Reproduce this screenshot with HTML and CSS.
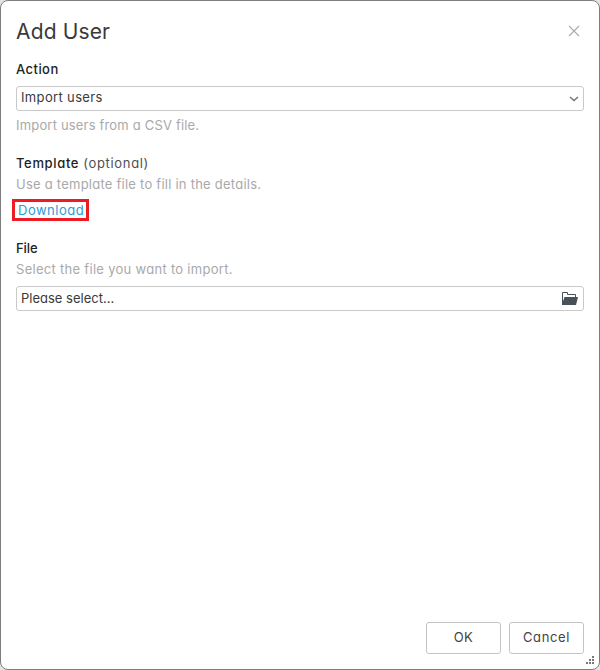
FILE: index.html
```
<!DOCTYPE html>
<html lang="en">
<head>
<meta charset="utf-8">
<title>Add User</title>
<link rel="stylesheet" href="styles.css">
</head>
<body>
<main class="dialog">
  <header class="header">
    <h1 class="title">Add User</h1>
    <svg class="close" width="12" height="12" viewBox="0 0 12 12"><path d="M1 1L11 11M11 1L1 11"/></svg>
  </header>
  <section class="group action">
    <div class="label"><span class="t-action">Action</span></div>
    <div class="field"><span class="t-value">Import users</span>
      <svg class="chevron" width="10" height="6" viewBox="0 0 10 6"><path d="M1 1L5 4.5L9 1"/></svg>
    </div>
    <div class="help"><span class="t-csv">Import users from a CSV file.</span></div>
  </section>
  <section class="group template">
    <div class="label"><span class="t-template">Template</span><span class="optional">(optional)</span></div>
    <div class="help"><span class="t-details">Use a template file to fill in the details.</span></div>
    <a class="download"><span class="t-download">Download</span></a>
  </section>
  <section class="group file">
    <div class="label"><span class="t-file">File</span></div>
    <div class="help"><span class="t-import">Select the file you want to import.</span></div>
    <div class="field field-file"><span class="t-please">Please select...</span>
      <svg class="folder" width="16" height="13" viewBox="0 0 16 13"><path class="back" d="M.5 12V.5H5.5V2.5H13.5V5"/><path class="front" d="M2.5 5H16L14 13H0V12Z"/></svg>
    </div>
  </section>
  <footer class="footer">
    <button class="button"><span class="t-ok">OK</span></button>
    <button class="button"><span class="t-cancel">Cancel</span></button>
  </footer>
  <svg class="grip" width="8" height="8" viewBox="0 0 8 8"><path d="M6 0h2v2H6zM3 3h2v2H3zM6 3h2v2H6zM0 6h2v2H0zM3 6h2v2H3zM6 6h2v2H6z"/></svg>
</main>
</body>
</html>
```
FILE: styles.css
```
* { box-sizing: border-box; }
body { margin: 0; background: #e4e4e4; }
.dialog {
  position: relative;
  display: flex;
  flex-direction: column;
  width: 600px;
  height: 670px;
  padding: 15px 15px;
  border: 1px solid #7d7d7d;
  border-radius: 8px;
  background: #fff;
  color: #3a3a3a;
  font: 13px/21px Inter, "Open Sans", sans-serif;
  font-feature-settings: "cv11";
  white-space: nowrap;
}
.header { display: flex; justify-content: space-between; height: 43px; padding-right: 4px; }
.title { margin: 0; font-size: 21px; line-height: 31px; font-weight: 400; letter-spacing: .15px; }
.close { margin-top: 9px; fill: none; stroke: #aaa; stroke-width: 1.1; }
.group { display: flex; flex-direction: column; }
.label { height: 21px; font-weight: 450; color: #222; }
.optional { margin-left: 4px; font-weight: 400; color: #505050; letter-spacing: .68px; }
.help { height: 21px; color: #a9a9a9; }
.t-action { letter-spacing: .45px; }
.t-value { letter-spacing: .35px; }
.t-csv { letter-spacing: .18px; }
.t-template { letter-spacing: .65px; }
.t-details { letter-spacing: .24px; }
.t-download { letter-spacing: .5px; }
.t-file { letter-spacing: -.1px; }
.t-import { letter-spacing: .29px; }
.t-ok { letter-spacing: .3px; }
.t-cancel { letter-spacing: .65px; }
.field {
  display: flex;
  align-items: center;
  justify-content: space-between;
  height: 25px;
  margin-top: 6px;
  padding: 0 4px 2px;
  border: 1px solid #c9c9c9;
  border-radius: 3px;
}
.field-file { padding-bottom: 0; }
.chevron { margin-top: 3px; fill: none; stroke: #777; stroke-width: 1.6; }
.folder { margin-right: 1px; }
.back { fill: none; stroke: #465257; }
.front { fill: #465257; }
.action .help { margin-top: 4px; }
.template { margin-top: 17px; }
.download {
  width: 77px;
  height: 22px;
  margin: 4px 0 0 -4px;
  padding-left: 3px;
  border: 3px solid #ed1c24;
  color: #2b9bd7;
  line-height: 16px;
}
.file { margin-top: 17px; }
.footer { display: flex; justify-content: flex-end; gap: 8px; margin-top: auto; }
.button {
  width: 75px;
  height: 32px;
  padding: 0 0 1px;
  border: 1px solid #c4c4c4;
  border-radius: 3px;
  background: #fff;
  color: #444;
  font: inherit;
  font-feature-settings: inherit;
}
.grip { position: absolute; right: 5px; bottom: 5px; fill: #777; }
```
